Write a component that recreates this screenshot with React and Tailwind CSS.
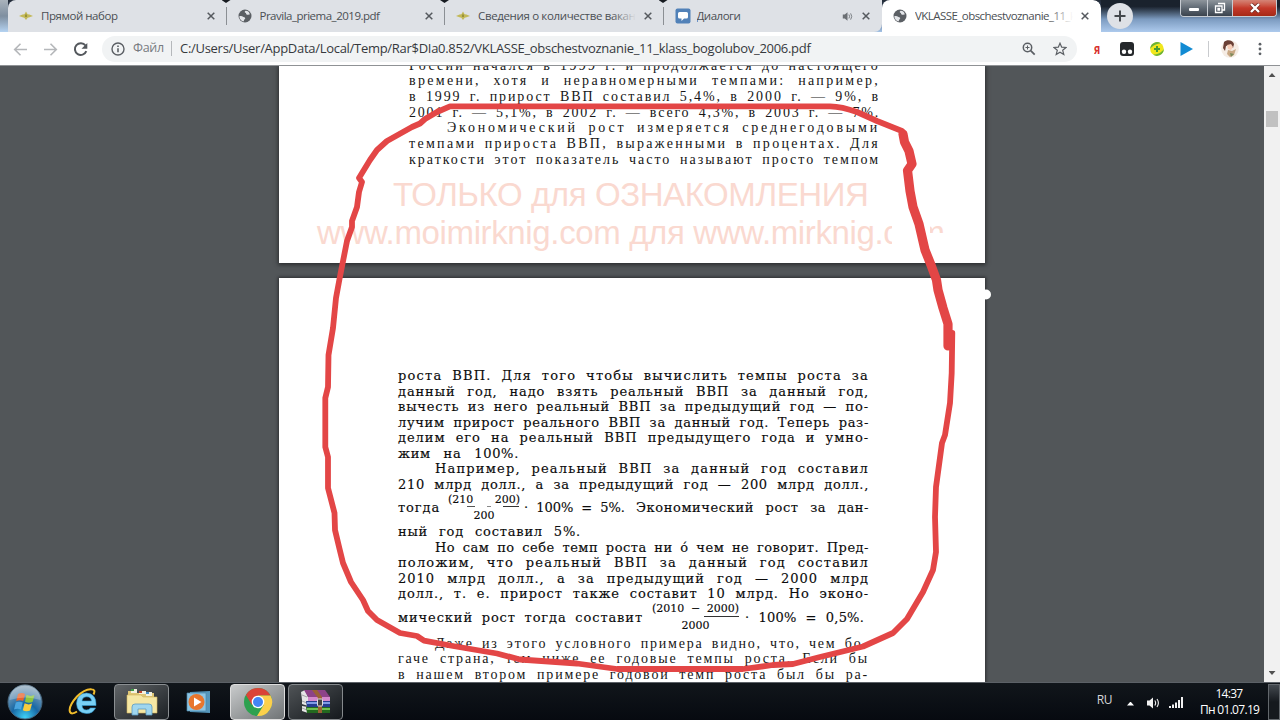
import React from "react";

const ui = "font-['Open_Sans','Noto_Sans',sans-serif]";

function Globe() {
  return (
    <svg viewBox="0 0 14 14" className="size-[14px]">
      <circle cx="7" cy="7" r="6.500" fill="#5b5f64" />
      <path d="M1.300 7.300C2.800 6.600 4.300 6.900 5 7.700c.6.700 1.900.3 2.200 1.300.3 1-.9 1.100-1.100 2 0 .6-.3 1.100-.8 1.500C3 11.800 1.400 9.900 1.300 7.300zM7.700 1.800c-1.200.500-1.200 1.700-.3 2 .9.300.5 1.500 1.500 1.900 1 .4 1.500-.6 2.900-.2C11.600 3.500 10 1.800 7.700 1.800z" fill="#e3e5e9" />
    </svg>
  );
}

function Eagle() {
  return (
    <svg viewBox="0 0 14 14" className="size-[14px]">
      <path d="M0 7 3.600 5.600 5.400 5.300 7 2.600 8.600 5.300 10.400 5.600 14 7 10.500 8.300 8.700 8.700 7 11 5.300 8.700 3.500 8.300z" fill="#c3b958" />
      <path d="M6 5.500h2v2.500H6z" fill="#98913a" />
    </svg>
  );
}

function Chat() {
  return (
    <svg viewBox="0 0 16 16" className="size-4">
      <rect x=".5" y=".5" width="15" height="15" rx="2" fill="#5181b8" />
      <path d="M4.500 4h7a1.500 1.500 0 0 1 1.500 1.500v3.500a1.500 1.500 0 0 1-1.500 1.500H9L6.500 13v-2.500h-2A1.500 1.500 0 0 1 3 9V5.500A1.500 1.500 0 0 1 4.500 4z" fill="#fff" />
    </svg>
  );
}

function Close() {
  return (
    <svg viewBox="0 0 8 8" className="size-2 shrink-0">
      <path d="M.7.7l6.600 6.600M7.300.7L.7 7.300" stroke="#55595e" strokeWidth="1.500" />
    </svg>
  );
}

function Speaker({ className, color }) {
  return (
    <svg viewBox="0 0 14 14" className={className}>
      <path d="M1 4.500h2.500L7 1.500v11L3.500 9.500H1z" fill={color} />
      <path d="M8.800 4.500q1.700 2.500 0 5M11 3q2.800 4 0 8" fill="none" stroke={color} strokeWidth="1.100" />
    </svg>
  );
}

function Tab({ icon, title, track, active, audio, divider, fade, last }) {
  return (
    <div className={"relative flex h-8 w-[218.5px] shrink-0 items-center pl-[11px] pr-[12px] " + (active ? "rounded-t-lg bg-white" : "bg-[#dee1e6]") + (last ? " rounded-br-lg" : "")}>
      <div className="flex w-[22px] shrink-0 items-center">{icon}</div>
      <div className={"relative h-[18px] flex-1 overflow-hidden whitespace-nowrap text-[11.5px] leading-[18px] text-[#4b4f54] " + track}>
        {title}
        {fade && <span className={"absolute inset-y-0 right-0 w-6 bg-linear-to-r " + (active ? "from-transparent to-white" : "from-transparent to-[#dee1e6]")} />}
      </div>
      {audio && <Speaker className="mr-[9px] size-[11px] shrink-0" color="#6b6f74" />}
      <div className={audio ? "mr-0" : fade ? "ml-2" : ""}><Close /></div>
      {divider && <span className="absolute right-0 top-[7px] h-[18px] w-px bg-[#8b8f94]" />}
      {divider && <span className="absolute -right-1 top-0 z-10 h-[3px] w-[9px] bg-[#171b21] [clip-path:polygon(0_0,100%_0,50%_100%)]" />}
    </div>
  );
}

function TabStrip() {
  return (
    <div className="flex h-8 bg-linear-to-b from-[#232b38] via-[#3e5675] to-[#a5c3e6]">
      <div className="w-2 bg-linear-to-b from-[#aab3bc] via-[#7f8fa0] to-[#b5d3f2]" />
      <div className="flex overflow-hidden rounded-t-lg">
        <Tab icon={<Eagle />} title="Прямой набор" track="tracking-[-0.45px]" divider />
        <Tab icon={<Globe />} title="Pravila_priema_2019.pdf" track="tracking-[-0.5px]" divider />
        <Tab icon={<Eagle />} title="Сведения о количестве вакантных" track="tracking-[-0.35px]" divider fade />
        <Tab icon={<Chat />} title="Диалоги" track="tracking-[-0.5px]" audio last />
        <Tab icon={<Globe />} title="VKLASSE_obschestvoznanie_11_klass" track="tracking-[-0.55px]" active fade />
      </div>
      <div className="flex flex-1 items-start bg-linear-to-b from-[#1a222d] from-20% via-[#7c9bc0] via-60% to-[#adcaed] pl-[6px]">
        <div className="mt-[3px] flex size-[26px] items-center justify-center rounded-full bg-[#dee1e6]">
          <svg viewBox="0 0 12 12" className="size-3"><path d="M6 .5v11M.5 6h11" stroke="#44484c" strokeWidth="2" /></svg>
        </div>
        <div className="ml-auto mr-[3px] flex h-[17px] w-[97px] overflow-hidden rounded-b border border-t-0 border-[#c7ccd2]">
          <div className="flex w-[27px] items-end justify-center border-r border-[#c7ccd2] bg-linear-to-b from-[#8e959c] via-[#606a74] to-[#3b434d] pb-[5px]">
            <span className="h-[3px] w-[10px] rounded-[1px] bg-white" />
          </div>
          <div className="flex w-[25px] items-center justify-center border-r border-[#c7ccd2] bg-linear-to-b from-[#8e959c] via-[#606a74] to-[#3b434d]">
            <svg viewBox="0 0 12 12" className="size-3"><path d="M4 1.500h6.500V8H8.500M1.500 4H8v6.500H1.500zM4 6.500h1.500V8H4z" fill="none" stroke="#fff" strokeWidth="1.300" /></svg>
          </div>
          <div className="flex flex-1 items-center justify-center bg-linear-to-b from-[#d48476] via-[#c5392a] to-[#a62a16]">
            <svg viewBox="0 0 12 10" className="h-[10px] w-3"><path d="M2 1l8 8M10 1L2 9" stroke="#6e2920" strokeWidth="3.800" /><path d="M2 1l8 8M10 1L2 9" stroke="#fff" strokeWidth="2.400" /></svg>
          </div>
        </div>
      </div>
    </div>
  );
}

function Toolbar() {
  return (
    <div className="flex h-[33px] items-center bg-white text-[13px]">
      <svg viewBox="0 0 102 30" className="h-[30px] w-[102px] shrink-0" fill="none" strokeWidth="1.600">
        <path d="M27 15.500H15M20.500 9.700l-5.800 5.800 5.800 5.800M44 15.500h12M50.500 9.700l5.800 5.800-5.800 5.800" stroke="#b5b7ba" />
        <path d="M85.500 11.500a5.900 5.900 0 1 0 .8 5.700" stroke="#54585d" strokeWidth="2" />
        <path d="M87.300 9v5.800h-5.800z" fill="#54585d" />
      </svg>
      <div className="flex h-[26px] w-[975px] items-center rounded-full bg-[#f1f3f4] pl-[9px] pr-[10px]">
        <svg viewBox="0 0 14 14" className="size-[14px]" fill="none" stroke="#5b5f64" strokeWidth="1.400">
          <circle cx="7" cy="7" r="6" /><path d="M7 6.200v4M7 3.400v1.500" strokeWidth="1.600" />
        </svg>
        <span className="ml-2 w-[38px] whitespace-nowrap text-[12.5px] tracking-[-0.3px] text-[#777b80]">Файл</span>
        <span className="h-[15px] w-px bg-[#b5b8bb]" />
        <span className="ml-2 flex-1 whitespace-nowrap tracking-[-0.29px] text-[#36393d]">C:/Users/User/AppData/Local/Temp/Rar$DIa0.852/VKLASSE_obschestvoznanie_11_klass_bogolubov_2006.pdf</span>
        <svg viewBox="0 0 14 14" className="mr-[17px] size-[14px]" fill="none" stroke="#5b5f64">
          <circle cx="5.500" cy="5.500" r="4.200" strokeWidth="1.500" /><path d="M8.700 8.700l4 4" strokeWidth="1.800" /><path d="M5.500 3.500v4M3.500 5.500h4" strokeWidth="1" />
        </svg>
        <svg viewBox="0 0 14 14" className="size-[14px]" fill="none" stroke="#5b5f64" strokeWidth="1.200">
          <path d="M7 1.200l1.700 4 4.300.3-3.300 2.800 1.100 4.300L7 10.300l-3.800 2.300 1.100-4.300L1 5.500l4.300-.3z" />
        </svg>
      </div>
      <span className="ml-[17px] w-[8px] origin-left scale-x-75 text-[14px] font-bold leading-none text-[#d8322f]">я</span>
      <svg viewBox="0 0 14 14" className="ml-[18px] size-[14px]">
        <rect width="14" height="14" rx="3" fill="#25282b" /><circle cx="4" cy="9.700" r="2.200" fill="#fff" /><circle cx="10" cy="9.700" r="2.200" fill="#fff" />
      </svg>
      <svg viewBox="0 0 14 14" className="ml-[16px] size-[14px]">
        <circle cx="7" cy="7" r="6.800" fill="#f1e71c" /><path d="M.2 7A6.800 6.800 0 0 1 11 1.500C7 1.500 3 3 .2 7zM13.800 7A6.800 6.800 0 0 1 3 12.500C8 12.500 11 11 13.800 7z" fill="#69b23b" /><path d="M7 4v6M4 7h6" stroke="#469b37" strokeWidth="2" />
      </svg>
      <svg viewBox="0 0 14 14" className="ml-[16px] size-[14px]"><path d="M.5 0l12.500 7L.5 14z" fill="#128bd3" /></svg>
      <span className="ml-[14px] h-4 w-px bg-[#c9cbce]" />
      <svg viewBox="0 0 18 20" className="ml-[12px] h-5 w-[18px]">
        <circle cx="9" cy="10" r="8.800" fill="#f5ece4" />
        <path d="M3 3c3-3 9-2 10 2l-1 4-3-3-4 1-1 5-2-3z" fill="#6b4036" />
        <path d="M6 6l4-1 2 3-2 3-3-1z" fill="#f6cdb8" /><path d="M7 11l4 1 4-2-2 6-4 2-3-3z" fill="#c9a884" /><path d="M9 14l4 1-3 3z" fill="#7d8b5b" />
      </svg>
      <svg viewBox="0 0 4 14" className="ml-[19px] h-[14px] w-1" fill="#5b5f64"><circle cx="2" cy="2.200" r="1.400" /><circle cx="2" cy="7" r="1.400" /><circle cx="2" cy="11.800" r="1.400" /></svg>
    </div>
  );
}

const thinLines = [
  ["России начался в 1999 г. и продолжается до настоящего", "tracking-[2.3px]"],
  ["времени, хотя и неравномерными темпами: например,", "tracking-[2.3px]"],
  ["в 1999 г. прирост ВВП составил 5,4%, в 2000 г. — 9%, в", "tracking-[1.9px]"],
  ["2001 г. — 5,1%, в 2002 г. — всего 4,3%, в 2003 г. — 7%.", "tracking-[1.8px]"],
  ["Экономический рост измеряется среднегодовыми", "tracking-[2.8px] pl-[38px]"],
  ["темпами прироста ВВП, выраженными в процентах. Для", "tracking-[2.3px]"],
  ["краткости этот показатель часто называют просто темпом", "tracking-[2px]"],
];

const bookLines = [
  ["роста ВВП. Для того чтобы вычислить темпы роста за", "tracking-[1.2px]"],
  ["данный год, надо взять реальный ВВП за данный год,", "tracking-[0.9px]"],
  ["вычесть из него реальный ВВП за предыдущий год — по-", "tracking-[0.85px]"],
  ["лучим прирост реального ВВП за данный год. Теперь раз-", "tracking-[0.7px]"],
  ["делим его на реальный ВВП предыдущего года и умно-", "tracking-[0.95px]"],
  ["жим на 100%.", "tracking-[0.7px] w-[121px]"],
  ["Например, реальный ВВП за данный год составил", "tracking-[1.2px] pl-[37px]"],
  ["210 млрд долл., а за предыдущий год — 200 млрд долл.,", "tracking-[0.7px]"],
];

const bookLines2 = [
  ["ный год составил 5%.", "tracking-[0.8px] w-[183px]"],
  ["Но сам по себе темп роста ни о́ чем не говорит. Пред-", "tracking-[0.5px] pl-[37px]"],
  ["положим, что реальный ВВП за данный год составил", "tracking-[1.2px]"],
  ["2010 млрд долл., а за предыдущий год — 2000 млрд", "tracking-[1px]"],
  ["долл., т. е. прирост также составит 10 млрд. Но эконо-", "tracking-[0.9px]"],
];

const tailLines = [
  ["Даже из этого условного примера видно, что, чем бо-", "tracking-[1.8px] pl-[37px]"],
  ["гаче страна, тем ниже ее годовые темпы роста. Если бы", "tracking-[1.8px]"],
  ["в нашем втором примере годовой темп роста был бы ра-", "tracking-[1.8px]"],
];

const thin = "font-['Liberation_Serif',serif] text-[14px] text-[#161616]";
const book = "font-['DejaVu_Serif',serif] text-[13px] text-[#0c0c0c] [-webkit-text-stroke:0.15px_#0c0c0c]";

function Lines({ rows, row }) {
  return rows.map(([text, cls]) => (
    <div key={text} className={row + " whitespace-nowrap [text-align-last:justify] " + cls}>{text}</div>
  ));
}

function FirstPage() {
  return (
    <div className="h-[197px] w-[706px] shrink-0 overflow-hidden bg-white shadow-[0_1px_4px_1px_#2c2e30]">
      <div className={"-mt-[8.5px] ml-[130px] w-[471px] " + thin}>
        <Lines rows={thinLines} row="h-[15.7px] leading-[15.7px]" />
      </div>
      <div className="relative mt-[8.5px] whitespace-nowrap font-['Liberation_Sans',sans-serif] text-[33px] leading-[38.5px] text-[#fad9d0]">
        <div className="ml-[114px] tracking-[-0.42px]">ТОЛЬКО для ОЗНАКОМЛЕНИЯ</div>
        <div className="ml-[38px] tracking-[-0.36px]">www.moimirknig.com для www.mirknig.com</div>
        <div className="absolute left-[613px] top-[46px] h-[34px] w-[38px] bg-white" />
        <div className="absolute left-[640px] top-[57px] h-[24px] w-[40px] bg-white" />
      </div>
    </div>
  );
}

function SecondPage() {
  return (
    <div className="mt-[15px] h-[404px] w-[706px] shrink-0 bg-white pl-[119px] pt-[90px] shadow-[0_0_3px_1px_#2c2e30]">
      <div className="w-[471px]">
        <div className={book}><Lines rows={bookLines} row="h-[15.5px] leading-[15.5px]" /></div>
        <div className={"flex h-[32px] items-center whitespace-nowrap " + book}>
          <span className="w-[50px] tracking-[0.9px]">тогда</span>
          <span className="flex w-[72px] flex-col items-center text-[11px] leading-[15px]">
            <span className="flex h-[13px] w-full justify-between leading-[13px]"><span>(210</span><span>200)</span></span>
            <span className="flex h-px w-full justify-end gap-3 pr-px"><span className="h-px w-2 bg-[#555]" /><span className="h-px w-1 bg-[#888]" /><span className="h-px w-4 bg-[#333]" /></span>
            <span className="h-[16px] leading-[18px]">200</span>
          </span>
          <span className="ml-[4px] w-[101px] [text-align-last:justify]">· 100% = 5%.</span>
          <span className="ml-[11px] flex-1 tracking-[0.6px] [text-align-last:justify]">Экономический рост за дан-</span>
        </div>
        <div className={book}><Lines rows={bookLines2} row="h-[15.5px] leading-[15.5px]" /></div>
        <div className={"flex h-[32px] items-center whitespace-nowrap " + book}>
          <span className="w-[245px] tracking-[0.9px] [text-align-last:justify]">мический рост тогда составит</span>
          <span className="ml-[9px] flex w-[87px] flex-col items-center text-[11px] leading-[15px]">
            <span className="flex h-[14px] w-full justify-between leading-[13px]"><span>(2010</span><span>−</span><span>2000)</span></span>
            <span className="h-px w-[35px] self-end bg-[#333]" />
            <span className="h-[16px] leading-[17px]">2000</span>
          </span>
          <span className="ml-[6px] w-[119px] tracking-[0.2px] [text-align-last:justify]">· 100% = 0,5%.</span>
        </div>
        <div className={"pt-[2px] " + thin}><Lines rows={tailLines} row="h-[15.5px] leading-[15.5px]" /></div>
      </div>
    </div>
  );
}

function Marker() {
  return (
    <svg viewBox="0 0 1280 720" className="pointer-events-none absolute inset-0 h-[720px] w-[1280px]" fill="none" stroke="#e34646" strokeLinejoin="round" strokeLinecap="round">
      <path strokeWidth="5.800" d="M902 131L877 121 857 112Q842 106.500 830 106.300H450L437 112 425 119 420 123.500 412 127 387 141 377 150 370 160 359 178 362 182 359 192 357 207 352 221 352 227 347 241 339.500 279 336 298 333 328 328.500 355 328 387 325.300 398V447L328 457V488L334.500 513 335 530 339.300 548 343 563 351 582 363 600 368 611 377 620 400 633 417 636 424 640.700 453 646 497 653.500 520 659.500 577 663.500 617 669H743L773 665 793 664 820 657 863 646.500 893 633 907 619 923 592 933 570 936 552 935 517 936 487 942 443 945 435 950 403 951.700 373 952.300 333" />
      <path strokeWidth="9.200" d="M903 134L904.500 142 909 151 912 164 907.500 170.500 910 191 913 207 919 224 925 250 931 265 936.500 280 938 290 943 308 948 324V346" />
      <circle cx="986" cy="294.500" r="5" fill="#fff" stroke="none" />
    </svg>
  );
}

function Viewer() {
  return (
    <div className="flex h-[617px] border-t border-[#8f9295] bg-[#525659]">
      <div className="flex flex-1 flex-col overflow-hidden pl-[279px]">
        <FirstPage />
        <SecondPage />
      </div>
      <div className="flex w-4 flex-col items-center bg-[#f1f1f1] pt-[7px]">
        <span className="h-1 w-[7px] bg-[#505050] [clip-path:polygon(50%_0,100%_100%,0_100%)]" />
        <span className="mt-[34px] h-4 w-3 bg-[#c1c1c1]" />
        <span className="mb-[7px] mt-auto h-1 w-[7px] bg-[#505050] [clip-path:polygon(0_0,100%_0,50%_100%)]" />
      </div>
    </div>
  );
}

function StartOrb() {
  return (
    <svg viewBox="0 0 36 36" className="size-9">
      <defs><radialGradient id="orb" cx=".5" cy=".95" r=".9"><stop offset="0" stopColor="#3fd0f5" /><stop offset=".45" stopColor="#1868a5" /><stop offset="1" stopColor="#8fa9bd" /></radialGradient></defs>
      <circle cx="18" cy="18" r="17" fill="url(#orb)" stroke="#47677f" />
      <path d="M11 10q4-2 7 0l-1.800 7q-3.500-1.700-7 0z" fill="#e8642d" />
      <path d="M19.500 10.800q4 2 8 .3l-2 7q-4 1.500-7.500-.3z" fill="#8cc63e" />
      <path d="M8.800 18.500q3.500-1.700 7 0l-1.800 7q-3.500-1.700-7 0z" fill="#4aa5e0" />
      <path d="M17.600 19.300q4 2 7.500.3l-2 7q-4 1.500-7.300-.3z" fill="#f8cc3d" />
      <path d="M2.500 16a15.500 15.500 0 0 1 31 0q-15-5-31 0z" fill="#fff" opacity=".25" />
    </svg>
  );
}

function Explorer() {
  return (
    <svg viewBox="0 0 32 28" className="h-7 w-8">
      <path d="M2 3h7l1 2h18v19H2z" fill="#dfc675" /><path d="M5 1h6v4H5zM13 3h7v3h-7zM20 4h6v4h-6z" fill="#f3f1df" /><path d="M5 1h3v2H5z" fill="#3c9a46" /><path d="M13 3h3v2h-3z" fill="#c4472f" /><path d="M20 4h3v2h-3z" fill="#4a8fc6" />
      <path d="M1 7h14l2 2h14v16H1z" fill="#f5e7a4" stroke="#d0b35c" strokeWidth=".6" />
      <path d="M6 27v-8q0-3 3-3h14q3 0 3 3v8h-6v-6h-8v6z" fill="#9fd6ee" stroke="#5a9bc0" strokeWidth=".8" />
    </svg>
  );
}

function Archive() {
  return (
    <svg viewBox="0 0 30 24" className="h-6 w-[30px]">
      <path d="M0 2l4-2 3 7v5l-6-2zM1 9l6 1v6l-6-2zM1 16l6 1v6l-6-2z" fill="#e6e6e6" /><path d="M1 5l5 2M1 11l5 2M1 18l5 2" stroke="#888" strokeWidth=".7" />
      <path d="M3 0h21l5 7H7z" fill="#8d4388" /><path d="M7 7h22v4H7z" fill="#d488cb" /><path d="M5 11h24v6H6z" fill="#243d91" /><path d="M6 12h23v2H6z" fill="#7e9be5" /><path d="M5 17h24v6H6z" fill="#23691f" /><path d="M6 18h23v2H6z" fill="#6fc152" />
      <path d="M11 0h5l5 7v16h-4V8z" fill="#9a6134" /><rect x="16.500" y="9" width="5" height="7" rx="1" fill="#444" stroke="#ddd" />
    </svg>
  );
}

function Taskbar() {
  return (
    <div className={"flex h-[38px] items-center border-t border-[#5c6167] bg-linear-to-b from-[#11161b] to-[#070a10] text-white " + ui}>
      <div className="ml-[7px]"><StartOrb /></div>
      <svg viewBox="0 0 30 30" className="ml-[25px] size-[30px]">
        <path d="M28 18.500H14q.5 4.500 4.500 4.500 2.500 0 4-2h5Q25 26.500 18.500 26.500 9 26 8.500 16.500 9 6.500 18.300 6 28.500 6.500 28 18.500zM14 14h9.500Q23 9.800 18.800 9.800 14.500 9.800 14 14z" fill="#79d0f5" stroke="#2f9bd4" strokeWidth=".6" />
        <path d="M25.500 7.500Q28 2.500 23.500 2.200 17 1.500 9 9.500 0 19.500 2 25q1.500 3 7-.5" fill="none" stroke="#f1bd2c" strokeWidth="2" />
      </svg>
      <div className="ml-[16px] flex h-9 w-[55px] items-center justify-center rounded-sm border border-[#8b8f92] bg-linear-to-br from-[#606467] to-[#1d2125]"><Explorer /></div>
      <svg viewBox="0 0 26 26" className="ml-[17px] size-[26px]">
        <path d="M4 3l20-1v22l-20-1z" fill="#5596bb" /><path d="M1 4h19v18H1z" fill="#8dc5e3" stroke="#4a86aa" strokeWidth=".7" /><circle cx="10.500" cy="13" r="8" fill="#e8762d" /><path d="M8 8.500l7.500 4.500L8 17.500z" fill="#fff" />
      </svg>
      <div className="ml-[18px] flex h-9 w-[55px] items-center justify-center rounded-sm border border-[#ddd] bg-linear-to-br from-[#c9cbcc] to-[#707476]">
        <svg viewBox="0 0 30 30" className="size-[30px]">
          <circle cx="15" cy="15" r="14" fill="#2da14f" /><path d="M2.900 8A14 14 0 0 1 27.500 8.500H15L9 18z" fill="#da4437" /><path d="M27.500 8.500A14 14 0 0 1 14 29l6.700-11L15 8.500z" fill="#fcd04b" /><circle cx="15" cy="15" r="6.300" fill="#fff" /><circle cx="15" cy="15" r="5" fill="#4285f4" />
        </svg>
      </div>
      <div className="ml-[3px] flex h-9 w-[55px] items-center justify-center rounded-sm border border-[#85898c] bg-linear-to-br from-[#505457] to-[#15191d]"><Archive /></div>
      <span className="mb-[3px] ml-auto text-[12px] tracking-[-0.5px] text-[#d5d6d8]">RU</span>
      <span className="ml-[15px] mt-[4px] h-1 w-[7px] bg-white [clip-path:polygon(50%_0,100%_100%,0_100%)]" />
      <Speaker className="ml-[12px] mt-[2px] size-[14px]" color="#f1f1f1" />
      <svg viewBox="0 0 14 12" className="ml-[9px] mt-[3px] h-3 w-[14px]" fill="#f1f1f1"><path d="M0 9h2v2H0zM3 7.500h2V11H3zM6 5.500h2V11H6zM9 3h2v8H9zM12 0h2v11h-2z" /></svg>
      <div className="ml-[17px] w-[58px] whitespace-nowrap text-center text-[12px] leading-[16px] tracking-[-0.7px]">
        <div>14:37</div>
        <div>Пн 01.07.19</div>
      </div>
      <div className="ml-[10px] h-9 w-[12px] border border-[#62676c] bg-linear-to-b from-[#444a50] via-[#15191e] to-[#15191e]" />
    </div>
  );
}

export default function App() {
  return (
    <div className="relative h-[720px] w-[1280px] overflow-hidden bg-[#525659]">
      <div className={ui}>
        <TabStrip />
        <Toolbar />
      </div>
      <Viewer />
      <Marker />
      <Taskbar />
    </div>
  );
}
